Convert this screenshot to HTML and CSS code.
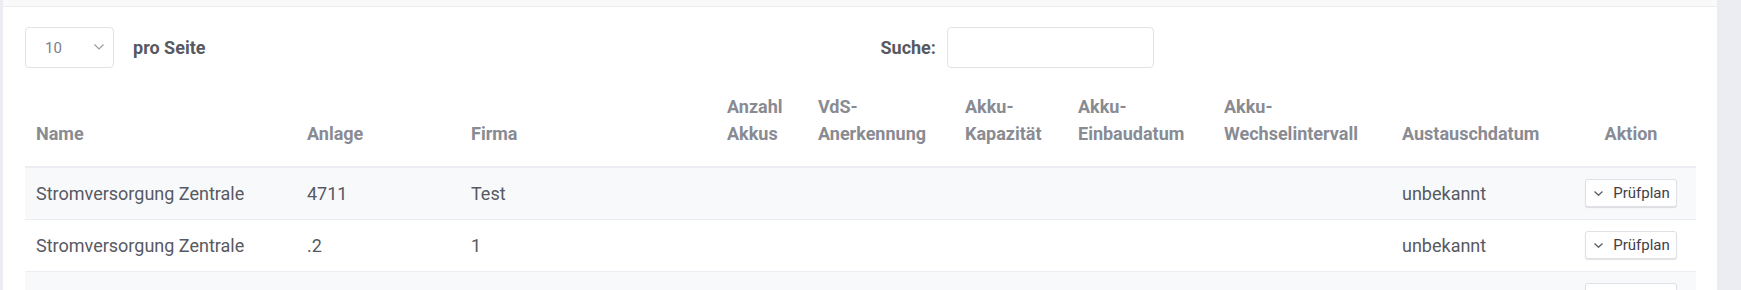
FILE: index.html
```html
<!DOCTYPE html>
<html lang="de">

<head>
    <meta charset="UTF-8">
    <meta name="viewport" content="width=device-width, initial-scale=1.0">
    <title>Stromversorgungen</title>
    <link rel="stylesheet" href="styles.css">
</head>

<body>
    <div class="page">
        <div class="topbar"></div>
        <div class="card">
            <div class="controls">
                <div class="length">
                    <div class="select">
                        <span>10</span>
                        <svg class="select-arrow" width="10" height="6" viewBox="0 0 10 6">
                            <polyline points="0.5,0.5 5,5 9.5,0.5" fill="none" stroke="#9a9ca5" stroke-width="1.2" />
                        </svg>
                    </div>
                    <span class="label">pro Seite</span>
                </div>
                <div class="filter">
                    <label class="label" for="search">Suche:</label>
                    <input type="search" id="search" class="search">
                </div>
            </div>

            <table class="table">
                <colgroup>
                    <col style="width: 271px">
                    <col style="width: 164px">
                    <col style="width: 256px">
                    <col style="width: 91px">
                    <col style="width: 147px">
                    <col style="width: 113px">
                    <col style="width: 146px">
                    <col style="width: 178px">
                    <col style="width: 175px">
                    <col style="width: 130px">
                </colgroup>
                <thead>
                    <tr>
                        <th>Name</th>
                        <th>Anlage</th>
                        <th>Firma</th>
                        <th>Anzahl<br>Akkus</th>
                        <th>VdS-<br>Anerkennung</th>
                        <th>Akku-<br>Kapazität</th>
                        <th>Akku-<br>Einbaudatum</th>
                        <th>Akku-<br>Wechselintervall</th>
                        <th>Austauschdatum</th>
                        <th class="center">Aktion</th>
                    </tr>
                </thead>
                <tbody>
                    <tr>
                        <td>Stromversorgung Zentrale</td>
                        <td>4711</td>
                        <td>Test</td>
                        <td></td>
                        <td></td>
                        <td></td>
                        <td></td>
                        <td></td>
                        <td>unbekannt</td>
                        <td class="actions"><button class="btn">
                                <svg width="9" height="5" viewBox="0 0 9 5">
                                    <polyline points="0.5,0.5 4.5,4.3 8.5,0.5" fill="none" stroke="#575962" stroke-width="1.2" />
                                </svg>Prüfplan</button></td>
                    </tr>
                    <tr>
                        <td>Stromversorgung Zentrale</td>
                        <td>.2</td>
                        <td>1</td>
                        <td></td>
                        <td></td>
                        <td></td>
                        <td></td>
                        <td></td>
                        <td>unbekannt</td>
                        <td class="actions"><button class="btn">
                                <svg width="9" height="5" viewBox="0 0 9 5">
                                    <polyline points="0.5,0.5 4.5,4.3 8.5,0.5" fill="none" stroke="#575962" stroke-width="1.2" />
                                </svg>Prüfplan</button></td>
                    </tr>
                    <tr>
                        <td></td>
                        <td></td>
                        <td></td>
                        <td></td>
                        <td></td>
                        <td></td>
                        <td></td>
                        <td></td>
                        <td></td>
                        <td class="actions"><button class="btn">
                                <svg width="9" height="5" viewBox="0 0 9 5">
                                    <polyline points="0.5,0.5 4.5,4.3 8.5,0.5" fill="none" stroke="#575962" stroke-width="1.2" />
                                </svg>Prüfplan</button></td>
                    </tr>
                </tbody>
            </table>
        </div>
    </div>
</body>

</html>
```

FILE: styles.css
```css
body {
    margin: 0;
    background-color: #ebedf2;
    font-family: Roboto, "Liberation Sans", sans-serif;
    color: #575962;
    height: 290px;
    overflow: hidden;
}

/* white area between the thin left strip and the right gutter */
.page {
    margin: 0 24px 0 3px;
    background-color: #fff;
}

.topbar {
    height: 6px;
    background-color: #f9f9fa;
    border-bottom: 1px solid #ebedf2;
}

.card {
    padding: 20px 21px 0 22px;
}

/* Length + search controls */
.controls {
    display: grid;
    grid-template-columns: 1fr 1fr;
    height: 41px;
}

.length,
.filter {
    display: flex;
    align-items: center;
}

.filter {
    padding-left: 20px;
}

.label {
    font-size: 18px;
    font-weight: 700;
    color: #575962;
}

.select {
    box-sizing: border-box;
    width: 89px;
    height: 41px;
    border: 1px solid #e2e3e8;
    border-radius: 4px;
    display: flex;
    align-items: center;
    justify-content: space-between;
    padding: 0 9px 0 19px;
    font-size: 15px;
    color: #7b7e88;
    margin-right: 19px;
}

.select-arrow {
    margin-top: -2px;
}

.search {
    box-sizing: border-box;
    width: 207px;
    height: 41px;
    border: 1px solid #e2e3e8;
    border-radius: 4px;
    margin-left: 11px;
    outline: none;
}

/* Table */
.table {
    width: 1671px;
    margin-top: 6px;
    border-collapse: collapse;
    table-layout: fixed;
    font-size: 18px;
    line-height: 27px;
}

.table th {
    text-align: left;
    vertical-align: bottom;
    font-weight: 700;
    color: #898b93;
    padding: 19px 11px;
    border-bottom: 2px solid #ebedf2;
}

.table td {
    height: 27px;
    padding: 12px 11px;
    border-top: 1px solid #ebedf2;
    vertical-align: middle;
}

.table tbody tr:nth-child(odd) {
    background-color: #f8f9fb;
}

.table .center {
    text-align: center;
}

.table .actions {
    text-align: center;
    line-height: 0;
    padding: 11px 11px 12px;
}

.btn {
    box-sizing: border-box;
    width: 92px;
    height: 28px;
    display: inline-flex;
    align-items: center;
    justify-content: center;
    gap: 10px;
    padding: 0 0 0 2px;
    background-color: #fff;
    border: 1px solid #e0e1e6;
    border-radius: 3px;
    box-shadow: 0 1px 1px rgba(0, 0, 0, 0.12);
    font-family: Roboto, "Liberation Sans", sans-serif;
    font-size: 15px;
    line-height: 1;
    color: #3f4047;
}
```
